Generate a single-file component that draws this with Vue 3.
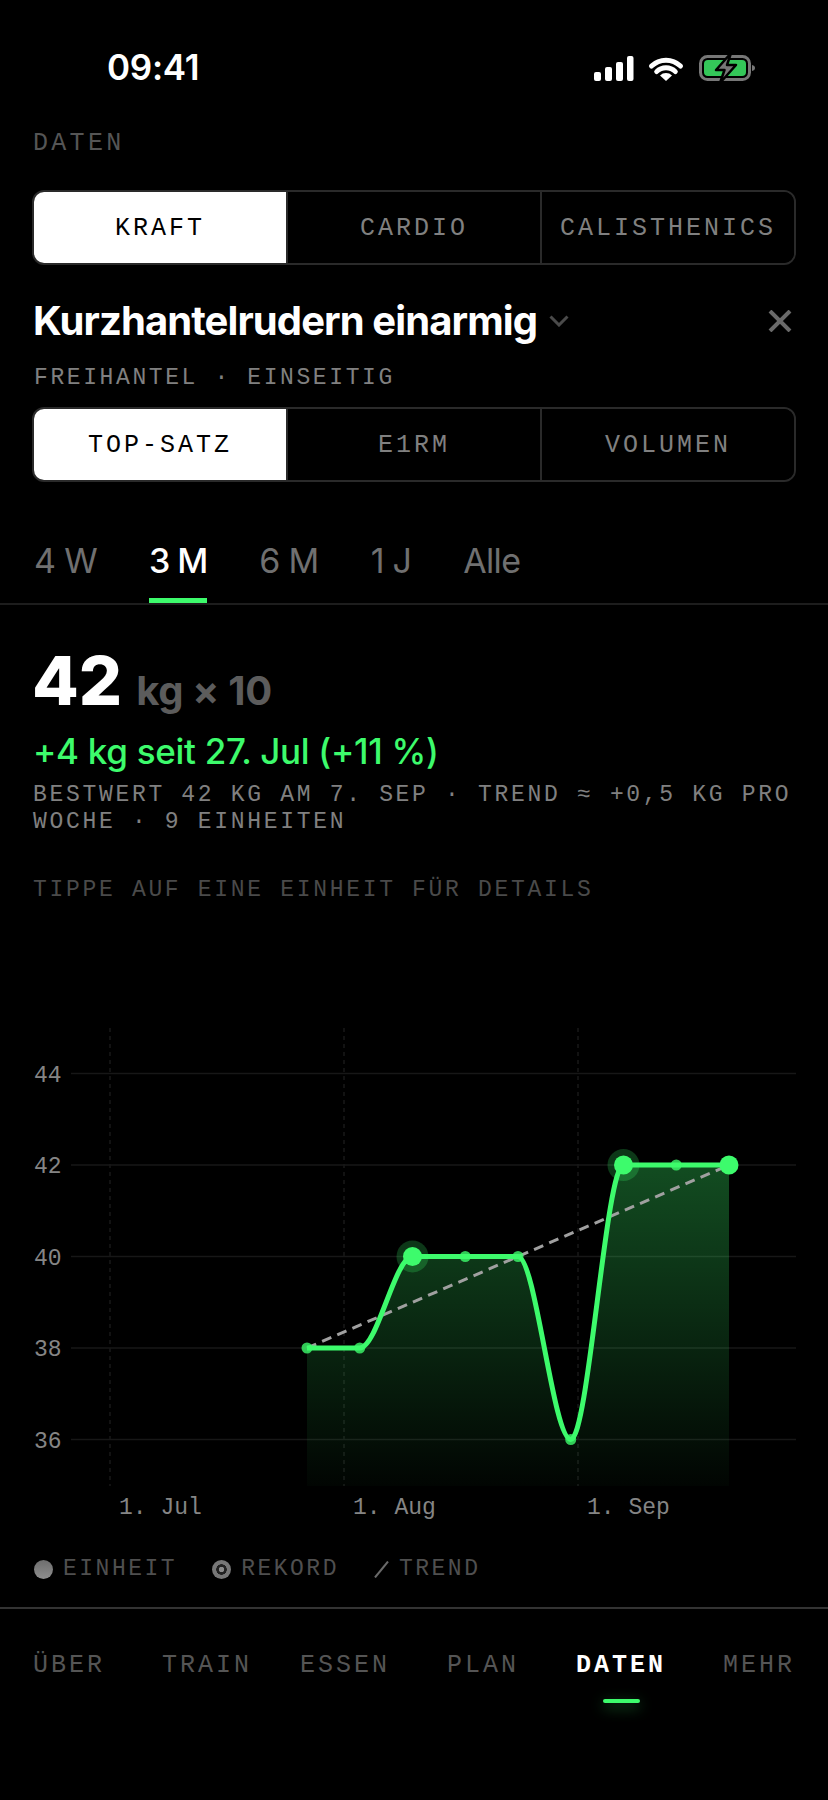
<template>
  <div class="screen">
    <header class="status">
      <span class="status__time">09:41</span>
      <div class="status__icons">
        <svg width="39" height="25" viewBox="594 54 39 25">
          <rect x="594" y="70" width="7" height="9" rx="2" fill="#fff" />
          <rect x="605" y="65" width="7" height="14" rx="2" fill="#fff" />
          <rect x="616" y="60" width="7" height="19" rx="2" fill="#fff" />
          <rect x="627" y="54" width="6.500" height="25" rx="2" fill="#fff" />
        </svg>
        <svg width="34" height="25" viewBox="649 55 34 25">
          <path d="M651.500 65A21 21 0 0 1 680.500 65" fill="none" stroke="#fff" stroke-width="5" stroke-linecap="round" />
          <path d="M656.600 70.600A13.400 13.400 0 0 1 675.400 70.600" fill="none" stroke="#fff" stroke-width="4.800" stroke-linecap="round" />
          <path d="M660 74.400A8.500 8.500 0 0 1 672 74.400L666 80Z" fill="#fff" />
        </svg>
        <svg width="56" height="26" viewBox="699 54 56 26">
          <rect x="700.500" y="55.500" width="49" height="23" rx="7" fill="none" stroke="#777" stroke-width="3" />
          <rect x="704" y="59" width="42" height="16" rx="4" fill="#34c759" />
          <path d="M752 64c2 .4 3 1.500 3 3s-1 2.600-3 3z" fill="#777" />
          <path d="M731 52L716 69h8.500l-4.500 13 16-18h-9z" fill="#777" stroke="#000" stroke-width="2.500" stroke-linejoin="round" />
        </svg>
      </div>
    </header>

    <div class="eyebrow">DATEN</div>

    <div class="seg seg--first">
      <button v-for="(s, i) in categories" :key="s" class="seg__item" :class="{ active: i === 0 }">{{ s }}</button>
    </div>

    <div class="exercise">
      <h1 class="exercise__title">Kurzhantelrudern einarmig</h1>
      <svg class="exercise__chev" width="20" height="12" viewBox="0 0 20 12">
        <path d="M1.500 1.500L10 10l8.500-8.500" fill="none" stroke="#4a4a4a" stroke-width="3" />
      </svg>
      <svg class="exercise__close" width="24" height="22" viewBox="0 0 24 22">
        <path d="M2 1l20 20M22 1L2 21" fill="none" stroke="#6a6a6a" stroke-width="4" />
      </svg>
    </div>
    <div class="sub">FREIHANTEL · EINSEITIG</div>

    <div class="seg seg--second">
      <button v-for="(s, i) in metrics" :key="s" class="seg__item" :class="{ active: i === 0 }">{{ s }}</button>
    </div>

    <div class="range">
      <button v-for="(r, i) in ranges" :key="r" class="range__item" :class="{ active: i === 1 }">{{ r }}</button>
    </div>

    <div class="value">
      <span class="value__num">42</span>
      <span class="value__unit">kg × 10</span>
    </div>
    <div class="delta">+4 kg seit 27. Jul (+11 %)</div>
    <p class="meta">BESTWERT 42 KG AM 7. SEP · TREND ≈ +0,5 KG PRO WOCHE · 9 EINHEITEN</p>
    <div class="hint">TIPPE AUF EINE EINHEIT FÜR DETAILS</div>

    <svg class="chart" width="828" height="510" viewBox="0 1020 828 510">
      <defs>
        <linearGradient id="area" gradientUnits="userSpaceOnUse" x1="0" y1="1165" x2="0" y2="1486">
          <stop offset="0" stop-color="#3dff6e" stop-opacity="0.3" />
          <stop offset="1" stop-color="#3dff6e" stop-opacity="0.02" />
        </linearGradient>
      </defs>

      <line v-for="x in months" :key="x.x" :x1="x.x" :x2="x.x" y1="1028" y2="1486" stroke="#181818" stroke-width="1.500" stroke-dasharray="4 4" />
      <g v-for="v in ticks" :key="v">
        <line x1="71" x2="796" :y1="yOf(v)" :y2="yOf(v)" stroke="#171717" stroke-width="1.500" />
        <text x="34" :y="yOf(v) + 8" class="chart__label">{{ v }}</text>
      </g>

      <path :d="areaPath" fill="url(#area)" />
      <line x1="307" y1="1348" x2="729" y2="1165" stroke="#a0a0a0" stroke-width="3" stroke-dasharray="10 6.500" />
      <path :d="linePath" fill="none" stroke="#3dfb6c" stroke-width="5" stroke-linejoin="round" />

      <g v-for="p in dots" :key="p.x">
        <circle v-if="p.kind === 'pr'" :cx="p.x" :cy="p.y" r="16" fill="#3dff6e" fill-opacity="0.22" />
        <circle :cx="p.x" :cy="p.y" :r="p.kind === 'small' ? 5.500 : 9.500" fill="#3dfb6c" :fill-opacity="p.kind === 'small' ? 0.8 : 1" />
      </g>

      <text v-for="m in months" :key="m.label" :x="m.x + 9" y="1514" class="chart__label">{{ m.label }}</text>
    </svg>

    <div class="legend">
      <span class="legend__item">
        <i class="legend__dot"></i>EINHEIT
      </span>
      <span class="legend__item">
        <i class="legend__dot legend__dot--ring"></i>REKORD
      </span>
      <span class="legend__item">
        <svg width="15" height="17" viewBox="0 0 15 17"><path d="M1 16.500L14 .5" stroke="#6a6a6a" stroke-width="2" /></svg>TREND
      </span>
    </div>

    <nav class="nav">
      <div v-for="(n, i) in tabs" :key="n" class="nav__item" :class="{ active: i === 4 }">
        <span>{{ n }}</span>
        <i v-if="i === 4" class="nav__mark"></i>
      </div>
    </nav>
  </div>
</template>

<script setup>
import { computed } from 'vue'

const categories = ['KRAFT', 'CARDIO', 'CALISTHENICS']
const metrics = ['TOP-SATZ', 'E1RM', 'VOLUMEN']
const ranges = ['4 W', '3 M', '6 M', '1 J', 'Alle']
const tabs = ['ÜBER', 'TRAIN', 'ESSEN', 'PLAN', 'DATEN', 'MEHR']
const ticks = [44, 42, 40, 38, 36]
const months = [
  { x: 110, label: '1. Jul' },
  { x: 344, label: '1. Aug' },
  { x: 578, label: '1. Sep' }
]
const sessions = [38, 38, 40, 40, 40, 36, 42, 42, 42]

function yOf(v) {
  return 1165 + (42 - v) * 45.75
}

const points = sessions.map((v, i) => ({ x: 307 + i * 52.75, y: yOf(v) }))

// every knot is flat or a turning point, so the tangents stay horizontal
const linePath = computed(() => {
  let d = `M${points[0].x} ${points[0].y}`
  for (let i = 1; i < points.length; i++) {
    const a = points[i - 1]
    const b = points[i]
    const dx = (b.x - a.x) / 3
    d += `C${a.x + dx} ${a.y} ${b.x - dx} ${b.y} ${b.x} ${b.y}`
  }
  return d
})
const areaPath = computed(() => `${linePath.value}L729 1486L307 1486Z`)

const dots = points.map((p, i) => ({
  ...p,
  kind: i === 2 || i === 6 ? 'pr' : i === 8 ? 'last' : 'small'
}))
</script>

<style>
html, body { background: #000; }
</style>

<style scoped>
.screen { width: 828px; height: 1800px; overflow: hidden; background: #000; color: #fff; font-family: Inter, "Liberation Sans", sans-serif; }

.status { display: flex; justify-content: space-between; align-items: center; height: 100px; padding: 34px 73px 0 107px; box-sizing: border-box; }
.status__time { font-size: 35px; font-weight: 600; line-height: 36px; letter-spacing: -0.3px; }
.status__icons { display: flex; align-items: center; gap: 16px; margin-top: 2px; }
.status__icons svg { display: block; overflow: visible; }

.eyebrow, .sub, .meta, .hint, .legend, .nav, .seg__item { font-family: "Liberation Mono", monospace; }

.eyebrow { margin: 29px 33px 0; font-size: 25px; line-height: 30px; letter-spacing: 3.300px; color: #555; }

.seg { display: grid; grid-template-columns: 252px 1fr 1fr; margin: 0 32px; height: 75px; box-sizing: border-box; border: 2px solid #2a2a2a; border-radius: 12px; overflow: hidden; }
.seg--first { margin-top: 31px; }
.seg--second { margin-top: 16px; }
.seg__item { padding: 2px 0 0; border: 0; border-left: 2px solid #2a2a2a; background: #000; color: #808080; font-size: 25px; letter-spacing: 3px; }
.seg__item.active { border-left: 0; background: #fff; color: #000; }

.exercise { display: flex; align-items: center; margin: 31px 33px 0; height: 50px; }
.exercise__title { margin: 0; font-size: 40px; font-weight: 700; line-height: 50px; letter-spacing: -0.9px; }
.exercise__chev { margin-left: 12px; }
.exercise__close { margin-left: auto; margin-right: 3px; }

.sub { margin: 19px 33px 0 34px; font-size: 23px; line-height: 26px; letter-spacing: 2.600px; color: #808080; }

.range { display: flex; gap: 52px; margin-top: 58px; padding-left: 34px; border-bottom: 2px solid #1d1d1d; }
.range__item { padding: 0 0 16px; border: 0; border-bottom: 5px solid transparent; background: none; color: #707070; font-family: inherit; font-size: 34px; font-weight: 400; line-height: 42px; letter-spacing: -0.7px; }
.range__item.active { color: #fff; font-weight: 500; letter-spacing: -1px; border-bottom-color: #3dfb6c; }

.value { display: flex; align-items: baseline; gap: 14px; margin: 39px 33px 0 32px; }
.value__num { font-size: 68px; font-weight: 800; line-height: 72px; }
.value__unit { font-size: 40px; font-weight: 700; color: #5c5c5c; letter-spacing: -0.3px; }

.delta { margin: 14px 33px 0; font-size: 35px; font-weight: 500; line-height: 42px; letter-spacing: -0.3px; color: #3dfb6c; }

.meta { margin: 10px 33px 0; font-size: 23px; line-height: 27px; letter-spacing: 2.680px; color: #808080; }

.hint { margin: 41px 33px 0; font-size: 23px; line-height: 27px; letter-spacing: 2.680px; color: #4a4a4a; }

.chart { display: block; margin-top: 116px; }
.chart__label { font-family: "Liberation Mono", monospace; font-size: 23px; fill: #858585; }

.legend { display: flex; margin: 24px 33px 0 34px; height: 30px; align-items: center; font-size: 23px; letter-spacing: 2.500px; color: #4f4f4f; }
.legend__item { display: flex; align-items: center; gap: 10px; margin-right: 35px; }
.legend__dot { display: block; width: 19px; height: 19px; border-radius: 50%; background: linear-gradient(#6e6e6e, #8e8e8e); }
.legend__dot--ring { background: radial-gradient(circle, #8a8a8a 0 2.500px, #222 3px 5px, #777 5.500px); }

.nav { display: grid; grid-template-columns: repeat(6, 1fr); margin-top: 23px; padding-top: 42px; border-top: 2px solid #333; }
.nav__item { display: flex; flex-direction: column; align-items: center; font-size: 25px; line-height: 30px; letter-spacing: 3px; color: #555; }
.nav__item.active { color: #fff; font-weight: 700; }
.nav__mark { display: block; width: 37px; height: 4px; margin-top: 18px; border-radius: 2px; background: #3dfb6c; box-shadow: 0 4px 14px rgba(61, 251, 108, 0.45); }
</style>
